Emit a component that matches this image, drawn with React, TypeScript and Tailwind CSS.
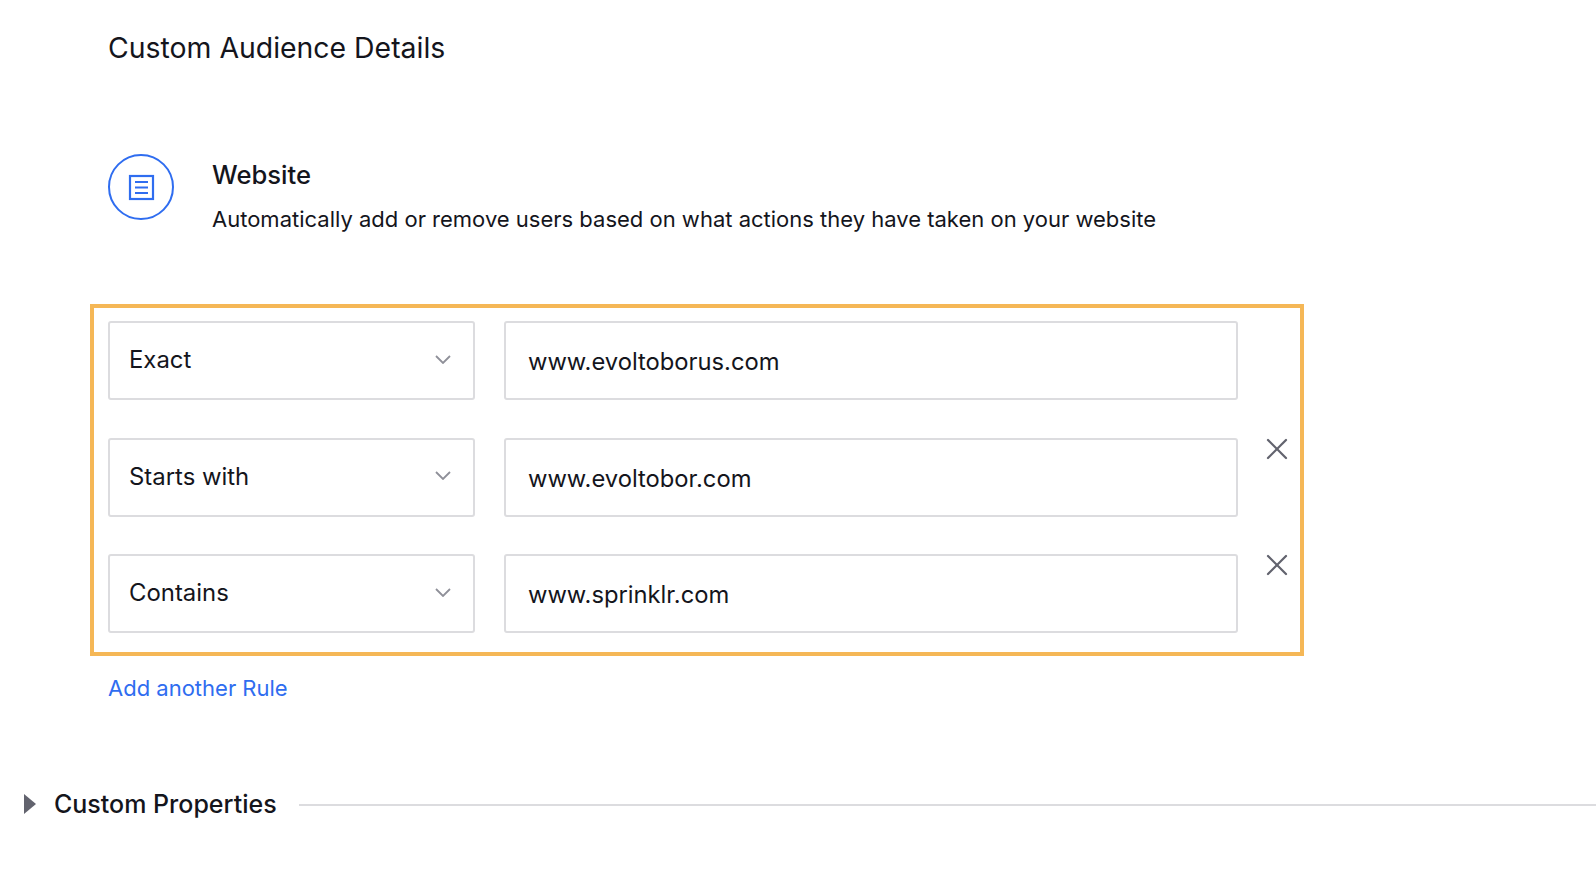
import { X } from 'lucide-react';

const rules = [
  { match: 'Exact', url: 'www.evoltoborus.com', removable: false },
  { match: 'Starts with', url: 'www.evoltobor.com', removable: true },
  { match: 'Contains', url: 'www.sprinklr.com', removable: true },
];

function Chevron() {
  return (
    <svg width="16" height="9" viewBox="0 0 16 9" fill="none" className="mr-[22px] mb-[3px]">
      <path d="M1 1l7 7 7-7" stroke="#8f9099" strokeWidth="1.8" />
    </svg>
  );
}

function WebsiteIcon() {
  return (
    <div className="flex h-[66px] w-[66px] shrink-0 items-center justify-center rounded-full border-2 border-[#2f6df0]">
      <svg width="27" height="27" viewBox="0 0 27 27" fill="none" stroke="#2f6df0" strokeWidth="2.2">
        <rect x="2" y="2" width="23" height="23" />
        <path d="M7 8h13M7 13.500h13M7 19h13" />
      </svg>
    </div>
  );
}

export default function App() {
  return (
    <div className="h-[888px] w-[1596px] overflow-hidden bg-white font-['Inter',sans-serif] text-[#14151c]">
      <h1 className="pl-[108px] pt-[30px] text-[28.400px] leading-[36px]">Custom Audience Details</h1>

      <div className="mt-[88px] flex pl-[108px]">
        <WebsiteIcon />
        <div className="ml-[38px] pt-[3px]">
          <h2 className="text-[25.600px] font-medium leading-[36px]">Website</h2>
          <p className="mt-[8px] text-[22px] leading-[36px]">
            Automatically add or remove users based on what actions they have taken on your website
          </p>
        </div>
      </div>

      <div className="ml-[90px] mt-[67px] flex w-[1214px] flex-col gap-[37.500px] border-4 border-[#f5b756] pb-[18.500px] pl-[14px] pt-[13px]">
        {rules.map((rule) => (
          <div key={rule.match} className="flex">
            <div className="flex h-[79px] w-[367px] items-center justify-between rounded-[3px] border-2 border-[#dcdcdf] pl-[19px] text-[23.900px]">
              <span className="pb-[1px]">{rule.match}</span>
              <Chevron />
            </div>
            <div className="ml-[28.500px] flex h-[79px] w-[734.500px] items-center rounded-[3px] border-2 border-[#dcdcdf] pl-[22.500px] pt-[3px] text-[23.750px]">
              {rule.url}
            </div>
            {rule.removable && (
              <X size={36} strokeWidth={1.5} color="#62636e" className="ml-[21px] mt-[-7px]" />
            )}
          </div>
        ))}
      </div>

      <a className="ml-[108px] mt-[14px] block text-[22px] leading-[36px] text-[#2f6df0]">Add another Rule</a>

      <div className="mt-[80px] flex items-center pl-[24px]">
        <div className="h-0 w-0 border-y-[10px] border-l-[12px] border-y-transparent border-l-[#62636e]" />
        <span className="ml-[18px] text-[25px] font-medium leading-[36px]">Custom Properties</span>
        <div className="ml-[22px] mt-[3px] h-[2px] flex-1 bg-[#dcdcdf]" />
      </div>
    </div>
  );
}
